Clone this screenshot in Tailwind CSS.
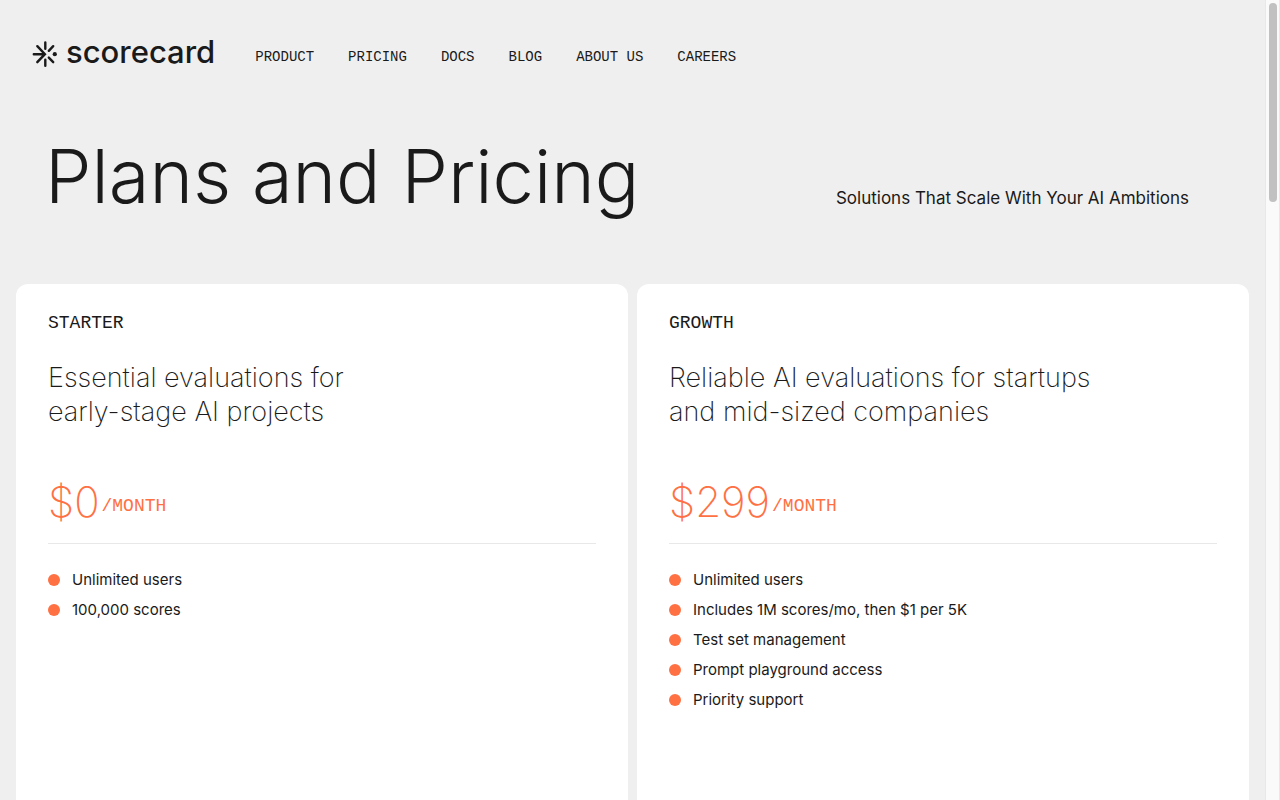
<!DOCTYPE html>
<html lang="en">
<head>
  <meta charset="UTF-8" />
  <title>Scorecard - Plans and Pricing</title>
  <meta name="viewport" content="width=device-width, initial-scale=1.0" />
  <script src="https://cdn.jsdelivr.net/npm/@tailwindcss/browser@4"></script>
</head>
<body class="flex h-screen overflow-hidden bg-[#efefef] font-['Inter',sans-serif] text-[#1a1a1a]">

  <div class="flex min-w-0 flex-1 flex-col">

    <!-- Navbar -->
    <header class="flex items-center gap-10 px-8 pt-8">
      <a href="#" class="flex items-center gap-2" aria-label="Scorecard home">
        <svg class="mt-1 h-[26px] w-[26px]" viewBox="0 0 26 26" fill="none" stroke="currentColor" stroke-width="2.4" stroke-linecap="round">
          <path d="M13.3 1.5v6.3M13.3 18.7v6M1.8 13.2h10.7M5.3 5.2l7.6 8l-7.6 8M16.8 9.8l4.4-4.6M16.8 16.6l4.4 4.6" />
          <circle cx="22.8" cy="13.2" r="2.1" fill="currentColor" stroke="none" />
        </svg>
        <span class="text-[31px] leading-10 font-medium">scorecard</span>
      </a>
      <nav class="flex gap-[34px] pt-[10px] font-['Liberation_Mono',monospace] text-sm">
        <a href="#">PRODUCT</a>
        <a href="#">PRICING</a>
        <a href="#">DOCS</a>
        <a href="#">BLOG</a>
        <a href="#">ABOUT US</a>
        <a href="#">CAREERS</a>
      </nav>
    </header>

    <!-- Page title -->
    <section class="flex items-end justify-between pt-14 pr-[76px] pb-[60px] pl-11">
      <h1 class="pl-px text-[74px] leading-[96px] font-light">Plans and Pricing</h1>
      <p class="pb-3 text-[17px] leading-7">Solutions That Scale With Your AI Ambitions</p>
    </section>

    <!-- Plans -->
    <main class="grid flex-1 grid-cols-2 gap-[9px] px-4">
      <section class="rounded-t-xl bg-white px-8 pt-[25px]">
        <h2 class="font-['Liberation_Mono',monospace] text-lg">STARTER</h2>
        <p class="mt-6 text-[27px] leading-[34px] font-extralight">Essential evaluations for<br />early-stage AI projects</p>
        <p class="mt-[41px] flex items-center gap-[2px] border-b border-[#e8e8e8] pb-[9px] text-[#ff7043]">
          <span class="text-[42px] leading-[64px] font-extralight">$0</span>
          <span class="pt-2 font-['Liberation_Mono',monospace] text-lg">/MONTH</span>
        </p>
        <ul class="mt-6 space-y-[6px]">
          <li class="flex items-center gap-3 text-[15px] leading-6"><span class="size-3 rounded-full bg-[#ff7043]"></span>Unlimited users</li>
          <li class="flex items-center gap-3 text-[15px] leading-6"><span class="size-3 rounded-full bg-[#ff7043]"></span>100,000 scores</li>
        </ul>
      </section>

      <section class="rounded-t-xl bg-white px-8 pt-[25px]">
        <h2 class="font-['Liberation_Mono',monospace] text-lg">GROWTH</h2>
        <p class="mt-6 text-[27px] leading-[34px] font-extralight">Reliable AI evaluations for startups<br />and mid-sized companies</p>
        <p class="mt-[41px] flex items-center gap-[2px] border-b border-[#e8e8e8] pb-[9px] text-[#ff7043]">
          <span class="text-[42px] leading-[64px] font-extralight">$299</span>
          <span class="pt-2 font-['Liberation_Mono',monospace] text-lg">/MONTH</span>
        </p>
        <ul class="mt-6 space-y-[6px]">
          <li class="flex items-center gap-3 text-[15px] leading-6"><span class="size-3 rounded-full bg-[#ff7043]"></span>Unlimited users</li>
          <li class="flex items-center gap-3 text-[15px] leading-6"><span class="size-3 rounded-full bg-[#ff7043]"></span>Includes 1M scores/mo, then $1 per 5K</li>
          <li class="flex items-center gap-3 text-[15px] leading-6"><span class="size-3 rounded-full bg-[#ff7043]"></span>Test set management</li>
          <li class="flex items-center gap-3 text-[15px] leading-6"><span class="size-3 rounded-full bg-[#ff7043]"></span>Prompt playground access</li>
          <li class="flex items-center gap-3 text-[15px] leading-6"><span class="size-3 rounded-full bg-[#ff7043]"></span>Priority support</li>
        </ul>
      </section>
    </main>
  </div>

  <!-- Scrollbar -->
  <div class="w-[15px] border-x border-[#e8e8e8] bg-[#fafafa] px-[3px] pt-[3px]" aria-hidden="true">
    <div class="h-1/4 w-2 rounded-full bg-[#c1c1c1]"></div>
  </div>

</body>
</html>
